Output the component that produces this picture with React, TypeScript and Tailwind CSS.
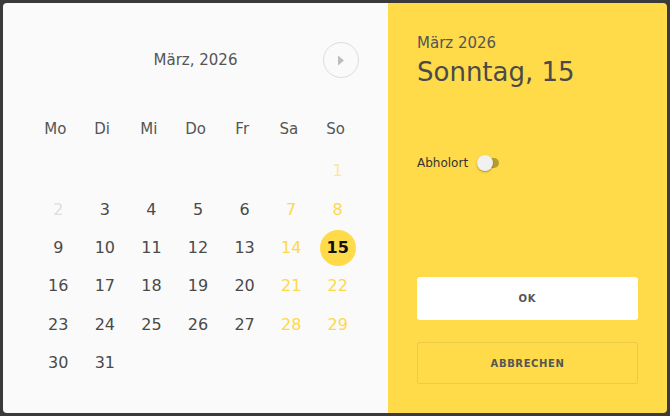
import React from 'react';

const weekdays = ['Mo', 'Di', 'Mi', 'Do', 'Fr', 'Sa', 'So'];

type Day = { n: number; kind: 'normal' | 'weekend' | 'disabled' | 'disabledWeekend' | 'selected' } | null;

function buildDays(): Day[] {
    const days: Day[] = [null, null, null, null, null, null];
    for (let n = 1; n <= 31; n++) {
        const col = (n + 5) % 7; // 0 = Mo
        let kind: NonNullable<Day>['kind'] = col >= 5 ? 'weekend' : 'normal';
        if (n === 1) kind = 'disabledWeekend';
        if (n === 2) kind = 'disabled';
        if (n === 15) kind = 'selected';
        days.push({ n, kind });
    }
    return days;
}

function DayCell({ day }: { day: Day }) {
    if (!day) return <div className="h-[38.4px]" />;
    const color = {
        normal: 'text-[#4a4a4a]',
        weekend: 'text-[#ffd84a]',
        disabled: 'text-[#dedede]',
        disabledWeekend: 'text-[#fbe89c]',
        selected: 'text-[#111] font-semibold',
    }[day.kind];
    return (
        <div className="h-[38.4px] flex items-center justify-center">
            {day.kind === 'selected' ? (
                <div className="w-[36px] h-[36px] rounded-full bg-[#ffdb4a] flex items-center justify-center text-[#111] font-semibold">
                    {day.n}
                </div>
            ) : (
                <span className={color}>{day.n}</span>
            )}
        </div>
    );
}

export default function App() {
    const days = buildDays();
    return (
        <div
            className="w-[670px] h-[416px] bg-[#3a3a3a] p-[3px]"
            style={{ fontFamily: '"DejaVu Sans", sans-serif' }}
        >
            <div className="flex h-[410px] w-[664px] rounded-[4px] overflow-hidden">
                {/* calendar */}
                <div className="w-[385px] bg-[#fafafa] px-[29px] pt-[39px]">
                    <div className="grid grid-cols-[36px_1fr_36px] items-center h-[36px]">
                        <div />
                        <div className="text-center text-[15px] text-[#555]">März, 2026</div>
                        <button className="w-[36px] h-[36px] rounded-full border border-[#dcdcdc] flex items-center justify-center">
                            <svg width="8" height="11" viewBox="0 0 8 11">
                                <path d="M1 0.5 L7 5.5 L1 10.5 Z" fill="#bdbdbd" />
                            </svg>
                        </button>
                    </div>
                    <div className="grid grid-cols-7 mt-[40px] h-[20px] items-center text-[15px] text-[#555]">
                        {weekdays.map((w) => (
                            <div key={w} className="text-center">{w}</div>
                        ))}
                    </div>
                    <div className="grid grid-cols-7 mt-[14px] ml-[3px] w-[326px] text-[16px]">
                        {days.map((d, i) => (
                            <DayCell key={i} day={d} />
                        ))}
                    </div>
                </div>

                {/* side */}
                <div className="flex-1 bg-[#ffdb4a] px-[29px] pt-[31px] flex flex-col">
                    <div className="text-[15px] text-[#555] leading-[18px]">März 2026</div>
                    <div className="text-[26px] text-[#4a4a4a] leading-[34px] mt-[3px]">Sonntag, 15</div>
                    <div className="flex items-center gap-[12px] mt-[66px] h-[16px]">
                        <span className="text-[12px] text-[#333]">Abholort</span>
                        <div className="relative w-[19px] h-[10px] rounded-full bg-[#b59e2e]">
                            <div className="absolute left-[-3px] top-[-3px] w-[16px] h-[16px] rounded-full bg-[#f1f1f1] shadow-[0_1px_2px_rgba(0,0,0,0.35)]" />
                        </div>
                    </div>
                    <button className="mt-[106px] h-[43px] w-full bg-white rounded-[3px] text-[10px] font-bold tracking-[0.8px] text-[#555]">
                        OK
                    </button>
                    <button className="mt-[22px] h-[42px] w-full border border-[#eacb45] rounded-[2px] text-[10px] font-bold tracking-[0.6px] text-[#555]">
                        ABBRECHEN
                    </button>
                </div>
            </div>
        </div>
    );
}
